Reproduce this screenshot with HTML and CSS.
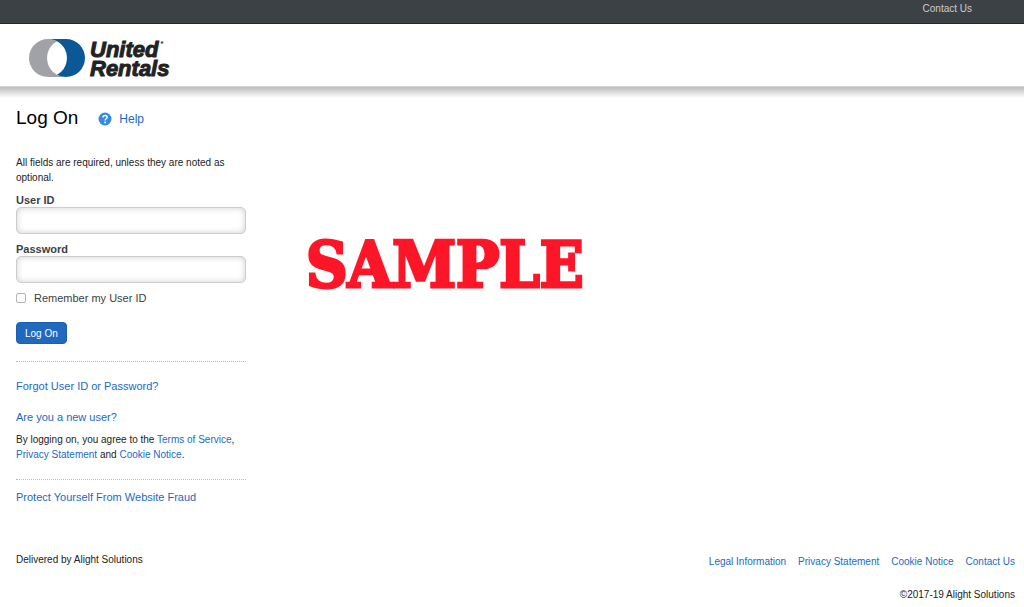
FILE: index.html
```html
<!DOCTYPE html>
<html lang="en">
<head>
  <meta charset="UTF-8" />
  <meta name="viewport" content="width=device-width, initial-scale=1.0" />
  <title>Log On - United Rentals</title>
  <link rel="stylesheet" href="styles.css">
</head>
<body>
  <!-- Top bar -->
  <nav class="top-bar">
    <a href="#contact">Contact Us</a>
  </nav>

  <!-- Header with logo -->
  <header class="header">
    <a class="logo" href="#home" aria-label="United Rentals">
      <svg class="logo-mark" width="58" height="40" viewBox="0 0 58 40" aria-hidden="true">
        <path d="M20 1 A19 19 0 0 0 20 39 H38 A19 19 0 0 1 29 3.3 A19 19 0 0 0 20 1 Z" fill="#a1a1a8" />
        <path d="M38 39 A19 19 0 0 0 38 1 H20 A19 19 0 0 1 29 36.7 A19 19 0 0 0 38 39 Z" fill="#0c5796" />
      </svg>
      <span class="logo-text">
        <span>United<svg class="logo-dot" width="4" height="16" viewBox="0 0 4 16" aria-hidden="true"><circle cx="2" cy="1.5" r="1.3" fill="#555" /></svg></span>
        <span>Rentals</span>
      </span>
    </a>
  </header>

  <main class="content">
    <div class="page-title">
      <h1>Log On</h1>
      <a class="help" href="#help">
        <svg width="14" height="14" viewBox="0 0 14 14" aria-hidden="true">
          <circle cx="7" cy="7" r="6.5" fill="#338be6" />
          <path d="M5 5.5 C5 2.8 9.2 2.8 9.2 5.3 C9.2 6.8 7.1 6.8 7.1 8.5" fill="none" stroke="#fff" stroke-width="1.4" />
          <circle cx="7.1" cy="10.4" r="0.9" fill="#fff" />
        </svg>
        Help
      </a>
    </div>

    <div class="columns">
      <div class="login">
        <form class="login-form" action="#">
          <p class="note">All fields are required, unless they are noted as optional.</p>
          <label class="field-label" for="userId">User ID</label>
          <input class="field" type="text" id="userId" />
          <label class="field-label" for="password">Password</label>
          <input class="field" type="password" id="password" />
          <div class="remember">
            <input type="checkbox" id="remember" />
            <label for="remember">Remember my User ID</label>
          </div>
          <button class="logon-btn" type="submit">Log On</button>
        </form>

        <div class="links">
          <a class="link" href="#forgot">Forgot User ID or Password?</a>
          <a class="link" href="#new-user">Are you a new user?</a>
          <p class="note">By logging on, you agree to the <a href="#terms">Terms of Service</a>, <a href="#privacy">Privacy Statement</a> and <a href="#cookies">Cookie Notice</a>.</p>
        </div>

        <div class="fraud">
          <a class="link" href="#fraud">Protect Yourself From Website Fraud</a>
        </div>
      </div>

      <div class="sample">SAMPLE</div>
    </div>
  </main>

  <footer class="footer">
    <div class="delivered">Delivered by Alight Solutions</div>
    <div class="footer-right">
      <div class="footer-links">
        <a href="#legal">Legal Information</a>
        <a href="#privacy">Privacy Statement</a>
        <a href="#cookies">Cookie Notice</a>
        <a href="#contact">Contact Us</a>
      </div>
      <div class="copyright">&copy;2017-19 Alight Solutions</div>
    </div>
  </footer>
</body>
</html>
```

FILE: styles.css
```css
/* Base */
* { margin: 0; padding: 0; box-sizing: border-box; }
body {
  font-family: "Liberation Sans", Arial, sans-serif;
  font-size: 10px;
  line-height: 14px;
  background: #fff;
  color: #222;
}
a {
  color: #1c69c4;
  text-decoration: none;
}
a:hover { text-decoration: underline; }

/* Top bar */
.top-bar {
  display: flex;
  justify-content: flex-end;
  height: 24px;
  padding: 2px 52px 0 16px;
  background: #3c4145;
  border-bottom: 1px solid #25282a;
}
.top-bar a { color: #ccc; }

/* Header */
.header {
  height: 63px;
  padding: 14px 28px 0;
  border-bottom: 1px solid #d4d4d4;
}
.logo {
  display: inline-flex;
  gap: 4px;
  color: #222;
}
.logo:hover { text-decoration: none; }
.logo-text {
  display: flex;
  flex-direction: column;
  padding-top: 2px;
  font-size: 22px;
  line-height: 19px;
  font-weight: bold;
  font-style: italic;
  -webkit-text-stroke: 1px #222;
}
.logo-dot { margin-left: 2px; }

/* Content */
.content {
  padding: 18px 16px 0;
  background: linear-gradient(#bdbdbd, #fff 11px);
}
.page-title {
  display: flex;
  align-items: center;
  gap: 20px;
  height: 26px;
}
.page-title h1 {
  font-size: 19px;
  font-weight: normal;
  color: #000;
}
.help {
  display: flex;
  align-items: center;
  gap: 7px;
  padding-top: 2px;
  font-size: 12px;
}
.columns {
  display: grid;
  grid-template-columns: 230px 1fr;
  gap: 60px;
  padding-top: 24px;
}

/* Login form */
.login-form {
  display: flex;
  flex-direction: column;
  padding-bottom: 17px;
}
.note { line-height: 15px; }
.login-form .note { margin-bottom: 8px; }
.field-label {
  font-size: 11px;
  font-weight: bold;
  color: #3c4145;
}
.field {
  width: 100%;
  height: 27px;
  padding: 4px 8px;
  margin-bottom: 8px;
  border: 1px solid #ccc;
  border-radius: 5px;
  box-shadow: inset 0 0 6px rgba(0,0,0,0.2);
}
.remember {
  display: flex;
  align-items: center;
  gap: 8px;
  font-size: 11px;
  color: #3c4145;
}
.remember input {
  appearance: none;
  width: 10px;
  height: 10px;
  border: 1px solid #b4b4b4;
  border-radius: 2px;
}
.remember input:checked { background: #1c69c4; }
.logon-btn {
  align-self: flex-start;
  height: 22px;
  padding: 0 8px;
  margin-top: 17px;
  font-family: inherit;
  font-size: 10px;
  color: #fff;
  background: #2169bf;
  border: 1px solid #1b5dae;
  border-radius: 4px;
  cursor: pointer;
}

/* Links below the form */
.links, .fraud {
  border-top: 1px dotted #bbb;
}
.links {
  padding: 17px 0;
}
.link {
  display: block;
  font-size: 11px;
}
.links .link {
  margin-bottom: 17px;
}
.links .link + .link {
  margin-bottom: 8px;
}
.fraud { padding-top: 10px; }

.sample {
  padding-top: 72px;
  font-family: "DejaVu Serif Condensed", "DejaVu Serif", serif;
  font-size: 64px;
  line-height: 76px;
  font-weight: bold;
  color: #fd1528;
  -webkit-text-stroke: 3px #fd1528;
}

/* Footer */
.footer {
  display: flex;
  justify-content: space-between;
  padding: 49px 9px 6px 16px;
}
.footer-right {
  padding-top: 2px;
  text-align: right;
}
.footer-links {
  display: flex;
  gap: 12px;
}
.copyright { margin-top: 19px; }
```
